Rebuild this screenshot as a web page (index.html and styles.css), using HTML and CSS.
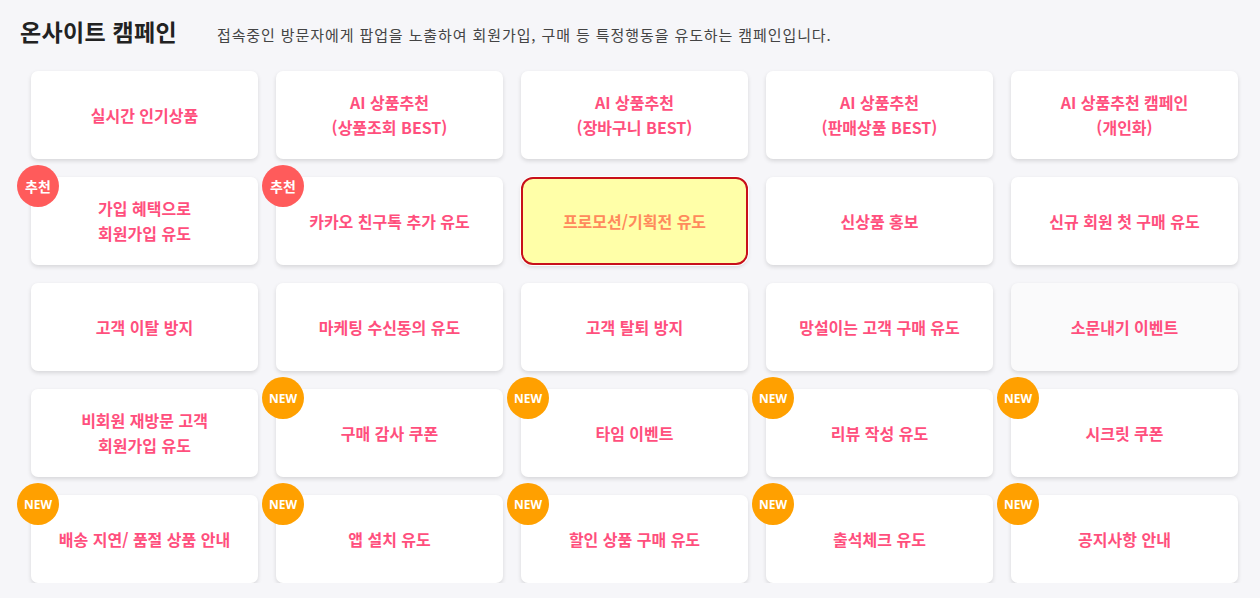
FILE: index.html
```html
<!DOCTYPE html>
<html lang="ko">
<head>
<meta charset="utf-8">
<link rel="stylesheet" href="styles.css">
</head>
<body>
<div class="page">
  <header class="head">
    <h1 class="title">온사이트 캠페인</h1>
    <p class="desc">접속중인 방문자에게 팝업을 노출하여 회원가입, 구매 등 특정행동을 유도하는 캠페인입니다.</p>
  </header>
  <div class="grid">
    <div class="card"><span class="label">실시간 인기상품</span></div>
    <div class="card"><span class="label">AI 상품추천<br>(상품조회 BEST)</span></div>
    <div class="card"><span class="label">AI 상품추천<br>(장바구니 BEST)</span></div>
    <div class="card"><span class="label">AI 상품추천<br>(판매상품 BEST)</span></div>
    <div class="card"><span class="label">AI 상품추천 캠페인<br>(개인화)</span></div>

    <div class="card"><span class="badge rec">추천</span><span class="label">가입 혜택으로<br>회원가입 유도</span></div>
    <div class="card"><span class="badge rec">추천</span><span class="label">카카오 친구톡 추가 유도</span></div>
    <div class="card selected"><span class="label">프로모션/기획전 유도</span></div>
    <div class="card"><span class="label">신상품 홍보</span></div>
    <div class="card"><span class="label">신규 회원 첫 구매 유도</span></div>

    <div class="card"><span class="label">고객 이탈 방지</span></div>
    <div class="card"><span class="label">마케팅 수신동의 유도</span></div>
    <div class="card"><span class="label">고객 탈퇴 방지</span></div>
    <div class="card"><span class="label">망설이는 고객 구매 유도</span></div>
    <div class="card hover"><span class="label">소문내기 이벤트</span></div>

    <div class="card"><span class="label">비회원 재방문 고객<br>회원가입 유도</span></div>
    <div class="card"><span class="badge new">NEW</span><span class="label">구매 감사 쿠폰</span></div>
    <div class="card"><span class="badge new">NEW</span><span class="label">타임 이벤트</span></div>
    <div class="card"><span class="badge new">NEW</span><span class="label">리뷰 작성 유도</span></div>
    <div class="card"><span class="badge new">NEW</span><span class="label">시크릿 쿠폰</span></div>

    <div class="card"><span class="badge new">NEW</span><span class="label">배송 지연/ 품절 상품 안내</span></div>
    <div class="card"><span class="badge new">NEW</span><span class="label">앱 설치 유도</span></div>
    <div class="card"><span class="badge new">NEW</span><span class="label">할인 상품 구매 유도</span></div>
    <div class="card"><span class="badge new">NEW</span><span class="label">출석체크 유도</span></div>
    <div class="card"><span class="badge new">NEW</span><span class="label">공지사항 안내</span></div>
  </div>
</div>
</body>
</html>
```

FILE: styles.css
```css
html, body {
  margin: 0;
  padding: 0;
  background: #f6f6f9;
}
body {
  font-family: "Noto Sans CJK KR", "Noto Sans", "Liberation Sans", sans-serif;
  color: #222;
}
.page {
  padding: 16px 22px 0 20px;
  width: 1260px;
  box-sizing: border-box;
}
.head {
  display: flex;
  align-items: baseline;
  height: 55px;
}
.title {
  margin: 0;
  font-size: 23px;
  font-weight: 700;
  color: #222;
  line-height: 30px;
  letter-spacing: 0.3px;
}
.desc {
  margin: 0 0 0 40px;
  font-size: 15px;
  color: #444;
  line-height: 30px;
  letter-spacing: 0.9px;
}
.grid {
  display: grid;
  grid-template-columns: repeat(5, 227px);
  grid-auto-rows: 88px;
  column-gap: 18px;
  row-gap: 18px;
  margin-left: 11px;
}
.card {
  position: relative;
  background: #fff;
  border-radius: 7px;
  box-shadow: 0 2px 4px rgba(0, 0, 0, 0.13);
  display: flex;
  align-items: center;
  justify-content: center;
  text-align: center;
  box-sizing: border-box;
}
.card.hover {
  background: #fafafb;
}
.card.selected {
  background: #ffffa8;
  border: 2px solid #c8101a;
  border-radius: 12px;
  box-shadow: 0 0 0 1px #fff, 0 2px 4px rgba(0, 0, 0, 0.13);
}
.card.selected .label {
  color: #ff8a5c;
}
.label {
  font-size: 16px;
  font-weight: 700;
  line-height: 25px;
  color: #ff4f7d;
  letter-spacing: 0;
}
.badge {
  position: absolute;
  left: -14px;
  top: -12px;
  width: 42px;
  height: 42px;
  border-radius: 50%;
  display: flex;
  align-items: center;
  justify-content: center;
  color: #fff;
  font-weight: 700;
  font-size: 14px;
}
.badge.rec {
  background: #ff5b5b;
}
.badge.new {
  background: #ffa000;
  font-family: "Open Sans", "Noto Sans", sans-serif;
  font-size: 12px;
  font-weight: 700;
}
```
